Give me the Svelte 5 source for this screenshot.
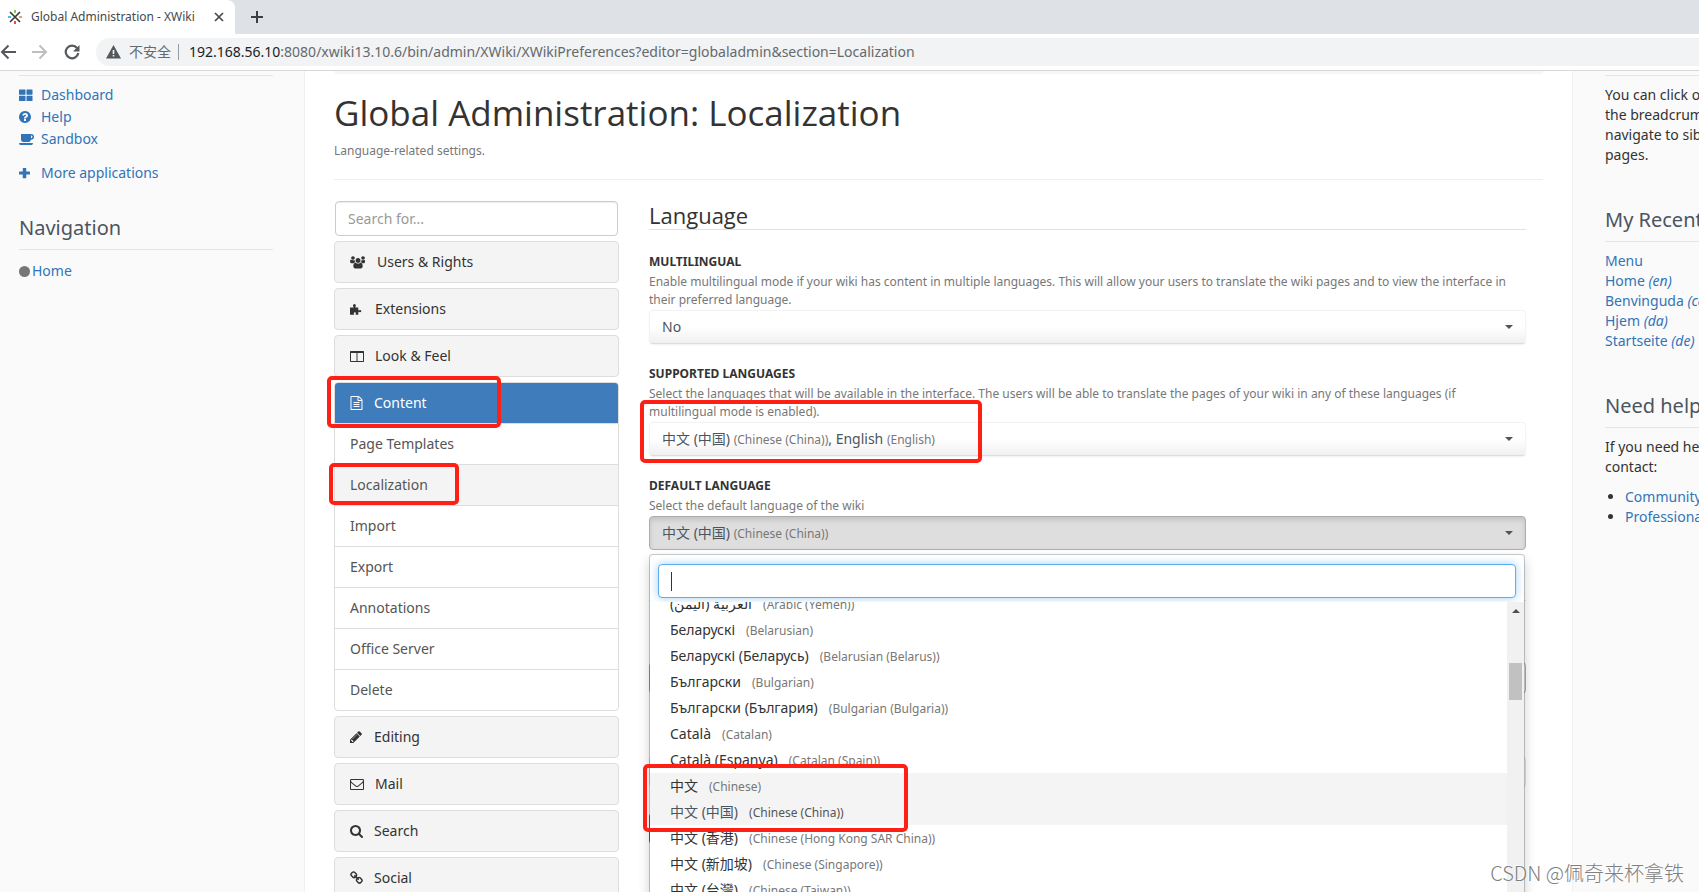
<script>
  const P = {
    users: { w: 16, d: 'M380 150a230 230 0 1 0 .1 0zM1668 150a230 230 0 1 0 .1 0zM1024 384a310 310 0 1 0 .1 0zM60 610q40-30 90 10 90 60 230 60 80 0 190-50 0 190 120 310-170 20-230 120H190Q20 1050 20 860 10 660 60 610zM1988 610q-40-30-90 10-90 60-230 60-80 0-190-50 0 190-120 310 170 20 230 120h160q170-10 170-200 10-200-40-250zM630 980q60-20 120 30 120 90 274 90t274-90q60-50 120-30 190 60 210 410 10 330-220 334H640q-230-4-220-334 20-350 210-410z' },
    puzzle: { w: 14, d: 'M0 700h440q40-10 20-70-90-90-80-180 20-170 190-180 170 10 180 180 0 90-70 180-20 60 30 70h350v330q10 70 70 40 50-50 140-60 170 10 180 150-10 150-180 160-90-10-140-60-60-30-70 40v324H740q-50-10-30-60 50-70 50-120-10-120-140-130-130 10-140 130 0 50 50 120 20 50-30 60H0z' },
    columns: { w: 14, d: 'M96 256h1600q96 0 96 96v1200q0 96-96 96H96q-96 0-96-96V352q0-96 96-96zm32 256v1008h704V512zm832 0v1008h704V512z' },
    file: { w: 13, x: 64, d: 'M1596 380q28 28 48 76t20 88v1152q0 40-28 68t-68 28h-1344q-40 0-68-28t-28-68v-1600q0-40 28-68t68-28h896q40 0 88 20t76 48zm-444-244v376h376q-10-29-22-41l-313-313q-12-12-41-22zm384 1528v-1024h-416q-40 0-68-28t-28-68v-416h-768v1536h1280zm-1024-864q0-14 9-23t23-9h704q14 0 23 9t9 23v64q0 14-9 23t-23 9h-704q-14 0-23-9t-9-23v-64zm736 224q14 0 23 9t9 23v64q0 14-9 23t-23 9h-704q-14 0-23-9t-9-23v-64q0-14 9-23t23-9h704zm0 256q14 0 23 9t9 23v64q0 14-9 23t-23 9h-704q-14 0-23-9t-9-23v-64q0-14 9-23t23-9h704z' },
    pencil: { w: 13, x: 128, d: 'M491 1536l91-91-235-235-91 91v107h128v128h107zm523-928q0-22-22-22-10 0-17 7l-542 542q-7 7-7 17 0 22 22 22 10 0 17-7l542-542q7-7 7-17zm-54-192l416 416-832 832h-416v-416zm683 96q0 53-37 90l-166 166-416-416 166-165q36-38 90-38 53 0 91 38l235 234q37 39 37 91z' },
    mail: { w: 14, d: 'M1664 1504v-768q-32 36-69 66-268 206-426 338-51 43-83 67t-86.5 48.5-102.5 24.5h-2q-48 0-102.5-24.5t-86.5-48.5-83-67q-158-132-426-338-37-30-69-66v768q0 13 9.5 22.5t22.5 9.5h1472q13 0 22.5-9.5t9.5-22.5zm0-1051v-24.5l-.5-13-3-12.5-5.5-9-9-7.5-14-2.5h-1472q-13 0-22.5 9.5t-9.5 22.5q0 168 147 284 193 152 401 317 6 5 35 29.5t46 37.5 44.5 31.5 50.5 27.5 43 9h2q20 0 43-9t50.5-27.5 44.5-31.5 46-37.5 35-29.5q208-165 401-317 54-43 100.5-115.5t46.5-131.5zm128-37v1088q0 66-47 113t-113 47h-1472q-66 0-113-47t-47-113v-1088q0-66 47-113t113-47h1472q66 0 113 47t47 113z' },
    search: { w: 13, x: 64, d: 'M1216 832q0-185-131.5-316.5t-316.5-131.5-316.5 131.5-131.5 316.5 131.5 316.5 316.5 131.5 316.5-131.5 131.5-316.5zm512 832q0 52-38 90t-90 38q-54 0-90-38l-343-342q-179 124-399 124-143 0-273.5-55.5t-225-150-150-225-55.5-273.5 55.5-273.5 150-225 225-150 273.5-55.5 273.5 55.5 225 150 150 225 55.5 273.5q0 220-124 399l343 343q37 37 37 90z' },
    link: { w: 13, x: 64, d: 'M1520 1216q0-40-28-68l-208-208q-28-28-68-28-42 0-72 32 3 3 19 18.5t21.5 21.5 15 19 13 25.5 3.5 27.5q0 40-28 68t-68 28q-15 0-27.5-3.5t-25.5-13-19-15-21.5-21.5-18.5-19q-33 31-33 73 0 40 28 68l206 207q27 27 68 27 40 0 68-26l147-146q28-28 28-67zm-703-705q0-40-28-68l-206-207q-28-28-68-28-39 0-68 27l-147 146q-28 28-28 67 0 40 28 68l208 208q27 27 68 27 42 0 72-31-3-3-19-18.5t-21.5-21.5-15-19-13-25.5-3.5-27.5q0-40 28-68t68-28q15 0 27.5 3.5t25.5 13 19 15 21.5 21.5 18.5 19q33-31 33-73zm895 705q0 120-85 203l-147 146q-83 83-203 83-121 0-204-85l-206-207q-83-83-83-203 0-123 88-209l-88-88q-86 88-208 88-120 0-204-84l-208-208q-84-84-84-204t85-203l147-146q83-83 203-83 121 0 204 85l206 207q83 83 83 203 0 123-88 209l88 88q86-88 208-88 120 0 204 84l208 208q84 84 84 204z' },
    grid: { w: 14, d: 'M96 192h672q64 0 64 64v544q0 64-64 64H64q-64 0-64-64V256q0-64 64-64zM1024 192h640q64 0 64 64v544q0 64-64 64h-640q-64 0-64-64V256q0-64 64-64zM64 992h704q64 0 64 64v544q0 64-64 64H64q-64 0-64-64v-544q0-64 64-64zM1024 992h640q64 0 64 64v544q0 64-64 64h-640q-64 0-64-64v-544q0-64 64-64z' },
    help: { w: 14, x: 128, d: 'M1024 1376v-192q0-14-9-23t-23-9h-192q-14 0-23 9t-9 23v192q0 14 9 23t23 9h192q14 0 23-9t9-23zm256-672q0-88-55.5-163t-138.5-116-170-41q-243 0-371 213-15 24 8 42l132 100q7 6 19 6 16 0 25-12 53-68 86-92 34-24 86-24 48 0 85.5 26t37.5 59q0 38-20 61t-68 45q-63 28-115.5 86.5t-52.5 125.5v36q0 14 9 23t23 9h192q14 0 23-9t9-23q0-19 21.5-49.5t54.5-49.5q32-18 49-28.5t46-35 44.5-48 28-60.5 12.5-81zm384 192q0 209-103 385.5t-279.5 279.5-385.5 103-385.5-103-279.5-279.5-103-385.5 103-385.5 279.5-279.5 385.5-103 385.5 103 279.5 279.5 103 385.5z' },
    coffee: { w: 15, d: 'M256 256h1280q384 20 384 360 0 360-400 370-20 290-290 294H550q-280-10-294-290zm1280 200v330q190 0 190-165t-190-165zM0 1408h1792q-10 240-200 240H200Q10 1648 0 1408z' },
    plus: { w: 14, d: 'M544 256h320q64 0 64 64v384h416q64 0 64 64v256q0 64-64 64H928v416q0 64-64 64H544q-64 0-64-64v-416H64q-64 0-64-64V768q0-64 64-64h416V320q0-64 64-64z' }
  };
  const top = [['Users & Rights', 'users'], ['Extensions', 'puzzle'], ['Look & Feel', 'columns']];
  const bottom = [['Editing', 'pencil'], ['Mail', 'mail'], ['Search', 'search'], ['Social', 'link']];
  const pages = ['Page Templates', 'Localization', 'Import', 'Export', 'Annotations', 'Office Server', 'Delete'];
  const langs = [
    ['العربية (اليمن)', '(Arabic (Yemen))'],
    ['Беларускі', '(Belarusian)'],
    ['Беларускі (Беларусь)', '(Belarusian (Belarus))'],
    ['Български', '(Bulgarian)'],
    ['Български (България)', '(Bulgarian (Bulgaria))'],
    ['Català', '(Catalan)'],
    ['Català (Espanya)', '(Catalan (Spain))'],
    ['中文', '(Chinese)', 'hover'],
    ['中文 (中国)', '(Chinese (China))', 'selected'],
    ['中文 (香港)', '(Chinese (Hong Kong SAR China))'],
    ['中文 (新加坡)', '(Chinese (Singapore))'],
    ['中文 (台灣)', '(Chinese (Taiwan))']
  ];
  const recent = [['Menu', ''], ['Home', '(en)'], ['Benvinguda', '(ca)'], ['Hjem', '(da)'], ['Startseite', '(de)']];
</script>

{#snippet icon(name)}
  <svg class="icon" width={P[name].w} height="14" viewBox="{P[name].x ?? 0} 0 {P[name].w * 128} 1792" aria-hidden="true"><path fill-rule="evenodd" d={P[name].d} /></svg>
{/snippet}

{#snippet panel(label, name)}
  <button type="button" class="panel">{@render icon(name)}<span>{label}</span></button>
{/snippet}

<div class="window">
  <header>
    <div class="tabs">
      <div class="tab">
        <svg width="16" height="16" viewBox="0 0 16 16" aria-hidden="true">
          <path d="M3 3l10 10M13 3L3 13" stroke="#3c3c3c" stroke-width="1.700" />
          <path d="M7 1h2v3H7z" fill="#8cc152" /><path d="M7 12h2v3H7z" fill="#f0484c" />
          <path d="M1 7h3v2H1z" fill="#57b8e8" /><path d="M12 7h3v2h-3z" fill="#f4a24c" />
        </svg>
        <span>Global Administration - XWiki</span>
        <button type="button" class="plain" aria-label="Close tab"><svg width="10" height="10" viewBox="0 0 10 10"><path d="M1 1l8 8M9 1L1 9" stroke="#45494d" stroke-width="1.7" /></svg></button>
      </div>
      <button type="button" class="plain new" aria-label="New tab"><svg width="12" height="12" viewBox="0 0 12 12"><path d="M6 0v12M0 6h12" stroke="#3c4043" stroke-width="2" /></svg></button>
    </div>
    <div class="toolbar">
      <button type="button" class="plain" aria-label="Back"><svg width="16" height="16" viewBox="0 0 16 16" fill="none" stroke="#55585c" stroke-width="2"><path d="M16 8H2M8.500 1.500L2 8l6.500 6.500" /></svg></button>
      <button type="button" class="plain" aria-label="Forward"><svg width="16" height="16" viewBox="0 0 16 16" fill="none" stroke="#bcbec1" stroke-width="2"><path d="M0 8h14M7.500 1.500L14 8l-6.500 6.500" /></svg></button>
      <button type="button" class="plain" aria-label="Reload"><svg width="16" height="16" viewBox="0 0 16 16"><path d="M13 4A6.300 6.300 0 1 0 14.300 9" fill="none" stroke="#55585c" stroke-width="2.200" /><path d="M15.500 1v6.500H9z" fill="#55585c" /></svg></button>
      <div class="address">
        <svg width="15" height="14" viewBox="0 0 15 14" aria-hidden="true"><path d="M7.500 0L15 13.500H0z" fill="#55585c" /><path d="M6.700 5h1.600v4H6.700zM6.700 10h1.600v1.600H6.700z" fill="#f1f3f4" /></svg>
        <span class="unsafe">不安全</span>
        <span class="url"><b>192.168.56.10</b>:8080/xwiki13.10.6/bin/admin/XWiki/XWikiPreferences?editor=globaladmin&amp;section=Localization</span>
      </div>
    </div>
  </header>

  <div class="page">
    <aside class="left">
      <ul class="apps">
        <li><a href="#dashboard"><i>{@render icon('grid')}</i>Dashboard</a></li>
        <li><a href="#help"><i>{@render icon('help')}</i>Help</a></li>
        <li><a href="#sandbox"><i>{@render icon('coffee')}</i>Sandbox</a></li>
        <li class="more"><a href="#more"><i>{@render icon('plus')}</i>More applications</a></li>
      </ul>
      <h2>Navigation</h2>
      <div class="tree"><span class="dot"></span><a href="#home">Home</a></div>
    </aside>

    <main>
      <div class="crumb"></div>
      <h1>Global Administration: Localization</h1>
      <p class="sub">Language-related settings.</p>
      <div class="cols">
        <nav>
          <input type="text" placeholder="Search for..." aria-label="Search for..." />
          {#each top as [label, name]}{@render panel(label, name)}{/each}
          <div class="open">
            <button type="button" class="panel active">{@render icon('file')}<span>Content</span></button>
            <span class="mark m-content"></span>
            {#each pages as p}
              <a href="#{p}" class:current={p === 'Localization'}>{p}{#if p === 'Localization'}<span class="mark m-loc"></span>{/if}</a>
            {/each}
          </div>
          {#each bottom as [label, name]}{@render panel(label, name)}{/each}
        </nav>

        <form>
          <h2>Language</h2>
          <div class="field">
            <label for="multi">MULTILINGUAL</label>
            <p>Enable multilingual mode if your wiki has content in multiple languages. This will allow your users to translate the wiki pages and to view the interface in their preferred language.</p>
            <div class="pick"><select id="multi"><option>No</option></select><span class="caret"></span></div>
          </div>
          <div class="field">
            <label for="supported">SUPPORTED LANGUAGES</label>
            <p>Select the languages that will be available in the interface. The users will be able to translate the pages of your wiki in any of these languages (if multilingual mode is enabled).</p>
            <div class="pick">
              <button type="button" id="supported">中文 (中国) <small>(Chinese (China))</small>, English <small>(English)</small></button><span class="caret"></span>
              <span class="mark m-sup"></span>
            </div>
          </div>
          <div class="field">
            <label for="default">DEFAULT LANGUAGE</label>
            <p>Select the default language of the wiki</p>
            <div class="pick">
              <button type="button" id="default" class="pressed">中文 (中国) <small>(Chinese (China))</small></button><span class="caret"></span>
              <div class="menu">
                <div class="filter"><input type="text" aria-label="Filter languages" /><span class="cursor"></span></div>
                <div class="scroll">
                  <ul>
                    {#each langs as [name, en, state]}
                      <li class={state}><span>{name}</span><small>{en}</small></li>
                    {/each}
                  </ul>
                  <div class="bar"><span class="up"></span><span class="thumb"></span></div>
                </div>
                <span class="mark m-zh"></span>
              </div>
            </div>
          </div>
          <div class="rest" aria-hidden="true"><div class="rule"></div><div class="box"></div><div class="box faint"></div><div class="save"></div></div>
        </form>
      </div>
    </main>

    <aside class="right">
      <div class="inner">
        <p class="tip">You can click on<br />the breadcrumb to<br />navigate to sibling<br />pages.</p>
        <h2>My Recent Modifications</h2>
        <ul class="recent">
          {#each recent as [t, l]}<li><a href="#{t}">{t} <em>{l}</em></a></li>{/each}
        </ul>
        <h2>Need help?</h2>
        <p>If you need help you can<br />contact:</p>
        <ul class="bullets">
          <li><a href="#community">Community</a></li>
          <li><a href="#professional">Professional</a></li>
        </ul>
      </div>
    </aside>
  </div>
  <div class="watermark">CSDN @佩奇来杯拿铁</div>
</div>

<style>
  :global(body) { overflow: hidden; }
  .window, .window * { box-sizing: border-box; }
  .window { position: relative; height: 100vh; display: flex; flex-direction: column; overflow: hidden; font: 14px/20px "Noto Sans", "Open Sans", "Noto Sans CJK SC", sans-serif; color: #333; background: #fff; }
  button, input, select { font: inherit; color: inherit; margin: 0; }
  h1, h2, p, ul { margin: 0; padding: 0; font-weight: 400; }
  ul { list-style: none; }
  a { color: #3174b8; text-decoration: none; }
  small { font-size: 12px; color: #777; }
  svg { display: block; flex: none; }
  .icon { fill: currentColor; }
  .plain { border: 0; padding: 0; background: none; display: flex; }

  .tabs { height: 34px; background: #dee1e6; display: flex; align-items: center; }
  .tab { width: 235px; height: 34px; background: #fff; border-radius: 0 8px 0 0; display: flex; align-items: center; padding: 0 11px 0 7px; font-size: 12px; color: #45494d; }
  .tab span { flex: 1; margin-left: 8px; white-space: nowrap; }
  .new { margin-left: 16px; }
  .toolbar { height: 37px; border-bottom: 1px solid #d6d8da; display: flex; align-items: center; gap: 16px; }
  .address { flex: 1; height: 28px; background: #f1f3f4; border-radius: 14px 0 0 14px; display: flex; align-items: center; padding-left: 10px; color: #66696d; white-space: nowrap; }
  .unsafe { margin-left: 8px; padding-right: 7px; border-right: 1px solid #9a9da1; line-height: 16px; }
  .url { margin-left: 10px; }
  .url b { font-weight: 400; color: #202124; }

  .page { flex: 1; min-height: 0; display: grid; grid-template-columns: 304px minmax(0, 1fr) 126px; }
  aside { background: #fafafa; overflow: hidden; }
  aside h2 { font-size: 20px; line-height: 24px; color: #4b5560; border-bottom: 1px solid #e5e5e5; white-space: nowrap; }
  .left { padding: 4px 31px 0 19px; }
  .apps { border-top: 1px solid #e5e5e5; padding-top: 9px; }
  .apps li { height: 22px; }
  .apps .more { margin-top: 12px; }
  .apps a { display: flex; align-items: center; }
  .apps i { width: 22px; }
  .left h2 { margin-top: 31px; padding-bottom: 9px; }
  .tree { display: flex; align-items: center; gap: 2px; margin-top: 11px; }
  .dot { width: 11px; height: 11px; border-radius: 50%; background: #777; }

  main { border-left: 1px solid #f0f0f0; border-right: 1px solid #f0f0f0; padding: 0 29px; min-width: 0; }
  .crumb { height: 3px; background: #f6f6f6; border-radius: 0 0 3px 3px; }
  h1 { font-family: "Open Sans", sans-serif; font-size: 35px; line-height: 40px; margin-top: 19px; white-space: nowrap; }
  .sub { font-size: 12px; line-height: 18px; color: #777; margin-top: 9px; padding-bottom: 19px; border-bottom: 1px solid #eee; }
  .cols { display: grid; grid-template-columns: minmax(0, 285fr) minmax(0, 877fr); gap: 30px; padding-right: 17px; margin-top: 21px; align-items: start; }
  nav { display: flex; flex-direction: column; gap: 5px; }
  nav input { width: auto; height: 35px; margin: 0 1px; border: 1px solid #ccc; border-radius: 4px; padding: 0 12px; box-shadow: inset 0 1px 1px rgba(0,0,0,.075); }
  nav input::placeholder { color: #999; opacity: 1; }
  .panel { height: 42px; width: 100%; border: 1px solid #ddd; border-radius: 4px; background: #f4f4f4; display: flex; align-items: center; gap: 11px; padding: 0 15px; }
  .open { position: relative; border: 1px solid #ddd; border-radius: 4px; }
  .active { height: 40px; border: 0; border-radius: 3px 3px 0 0; background: #3f7cbb; color: #fff; }
  .open a { display: block; position: relative; height: 41px; line-height: 40px; padding-left: 15px; border-top: 1px solid #ddd; color: #555; }
  .open a.current { background: #f4f4f4; }

  .mark { position: absolute; border: 4px solid #ff2015; border-radius: 5px; pointer-events: none; z-index: 5; }
  .m-content { left: -8px; top: -7px; width: 174px; height: 52px; }
  .m-loc { left: -6px; top: -2px; width: 130px; height: 42px; }
  .m-sup { left: -9px; top: -22px; width: 342px; height: 63px; }
  .m-zh { left: -7px; top: 209px; width: 265px; height: 68px; }

  form { min-width: 0; }
  form h2 { font-family: "Open Sans", sans-serif; font-size: 22px; line-height: 28px; border-bottom: 1px solid #e2e2e2; margin-bottom: 22px; }
  .field { margin-bottom: 20px; }
  .field label { display: block; font-size: 12px; font-weight: 700; line-height: 20px; }
  .field p { font-size: 12px; line-height: 18px; color: #777; padding: 1px 0; }
  .pick { position: relative; height: 34px; }
  .pick > select, .pick > button { width: 100%; height: 34px; display: block; text-align: left; appearance: none; padding: 0 12px; border: 1px solid #f3f3f3; border-bottom-color: #ddd; border-radius: 4px; color: #4b5560; background: linear-gradient(#fff 50%, #f0f0f0); box-shadow: 0 1px 2px rgba(0,0,0,.06); }
  .pick > button.pressed { background: #dedede; border-color: #adadad; box-shadow: inset 0 3px 5px rgba(0,0,0,.125); }
  .caret { position: absolute; right: 13px; top: 15px; border: 4px solid transparent; border-top-color: #4b5560; border-bottom: 0; }

  .menu { position: absolute; left: 0; right: 1px; top: 38px; height: 430px; background: #fff; background-clip: padding-box; border: 1px solid rgba(0,0,0,.2); border-radius: 4px; box-shadow: 0 6px 12px rgba(0,0,0,.18); z-index: 3; }
  .filter { position: relative; margin: 9px 8px 4px; }
  .filter input { display: block; width: 100%; height: 34px; border: 1px solid #5eaeec; border-radius: 4px; outline: 0; box-shadow: 0 0 8px rgba(102,175,233,.6); }
  .cursor { position: absolute; left: 13px; top: 8px; height: 19px; border-left: 1px solid #333; }
  .scroll { position: relative; z-index: 1; height: 380px; overflow: hidden; display: flex; background: #fff; }
  .scroll ul { flex: 1; margin-top: -11px; }
  .scroll li { height: 26px; line-height: 26px; padding-left: 20px; white-space: nowrap; }
  .scroll small { margin-left: 11px; }
  .hover, .selected { background: #f4f4f4; }
  .selected { color: #4b5560; }
  .selected small { color: #555; }
  .bar { width: 17px; background: #f1f1f1; display: flex; flex-direction: column; align-items: center; }
  .up { margin-top: 7px; border: 4px solid transparent; border-bottom-color: #505050; border-top: 0; }
  .thumb { margin-top: 50px; width: 13px; height: 37px; background: #c1c1c1; }

  .rest { padding-top: 30px; }
  .rule { border-top: 1px solid #e2e2e2; margin-bottom: 61px; }
  .box { height: 32px; border: 1px solid #aaa; border-radius: 4px; margin-bottom: 62px; }
  .faint { border-color: #ddd; margin-bottom: 25px; }
  .save { width: 80px; height: 31px; background: #3174b8; border-radius: 4px; }

  .right .inner { width: 260px; padding: 4px 0 0 32px; }
  .tip { border-top: 1px solid #e5e5e5; padding-top: 9px; }
  .right h2 { margin-top: 43px; padding-bottom: 9px; }
  .recent { margin: 9px 0 0; }
  .right h2 + p { margin-top: 9px; }
  .bullets { list-style: disc; padding-left: 20px; margin-top: 10px; }
  .watermark { position: absolute; right: 15px; bottom: 6px; font-family: "Noto Sans CJK SC", sans-serif; font-weight: 300; font-size: 20px; line-height: 26px; color: #808080; text-shadow: -1px -1px 0 #fff; z-index: 9; }
</style>
